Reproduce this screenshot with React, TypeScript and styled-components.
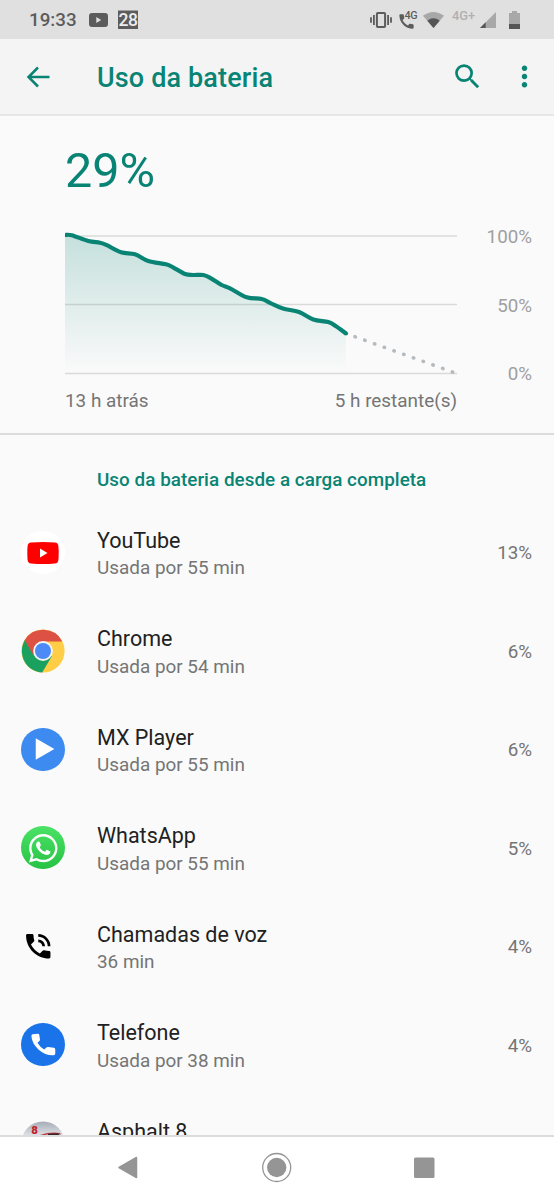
import React from "react";
import styled, { createGlobalStyle } from "styled-components";
import { MdCall, MdPhoneInTalk, MdSearch, MdMoreVert } from "react-icons/md";
import { FaWhatsapp } from "react-icons/fa";

const teal = "#098474";

const GlobalStyle = createGlobalStyle`
  * { box-sizing: border-box; }
  body { margin: 0; background: #fafafa; font-family: Roboto, sans-serif; overflow: hidden; }
`;

const Screen = styled.div`
  width: 554px;
  height: 1200px;
  display: flex;
  flex-direction: column;
  background: #fafafa;
  overflow: hidden;
`;

const StatusBar = styled.div`
  height: 39px;
  flex: none;
  display: flex;
  justify-content: space-between;
  background: #e0e0e0;
  color: #5c5c5c;
`;

const StatusGroup = styled.div`
  display: flex;
  align-items: center;
  &:first-child { padding-left: 29px; }
  &:last-child { padding-right: 34px; }
  svg { display: block; flex: none; }
`;

const Clock = styled.span`
  width: 60px;
  padding-top: 1px;
  font-size: 18.8px;
  line-height: 39px;
  font-weight: 500;
`;

const DateBadge = styled.span`
  width: 20px;
  height: 19px;
  margin: 0 0 0 10px;
  border-top: 1px solid #a0a0a0;
  background: #5c5c5c;
  color: #eee;
  font-size: 17.5px;
  line-height: 19px;
  font-weight: 500;
  letter-spacing: -0.4px;
  text-align: center;
`;

const CallStatus = styled.span`
  display: flex;
  width: 20.5px;
  margin: 0 6px 0 4.5px;
  font-size: 10.8px;
  font-weight: 500;
  line-height: 12px;
  svg { margin-top: 3px; }
  span { margin-left: -11px; margin-top: 1px; letter-spacing: -0.5px; }
`;

const NetworkLabel = styled.span`
  width: 24px;
  margin: -8px 4px 0 8px;
  color: #b0b0b0;
  font-size: 12.8px;
  font-weight: 500;
  line-height: 14px;
`;

const Toolbar = styled.header`
  height: 77px;
  flex: none;
  display: flex;
  align-items: center;
  border-bottom: 2px solid #e6e6e6;
  background: #f4f4f4;
  color: ${teal};
  svg { display: block; flex: none; }
`;

const BackButton = styled.div`
  width: 97px;
  padding-left: 26px;
`;

const Title = styled.h1`
  flex: 1;
  margin: 3px 0 0;
  font-size: 27px;
  line-height: 32px;
  font-weight: 500;
  letter-spacing: 0.14px;
`;

const ToolbarActions = styled.div`
  display: flex;
  align-items: center;
  gap: 24px;
  padding-right: 13px;
`;

const UsageSummary = styled.section`
  height: 319px;
  flex: none;
  padding: 29px 22px 0 65px;
  border-bottom: 2px solid #dcdcdc;
`;

const Level = styled.div`
  height: 56px;
  color: ${teal};
  font-size: 48.5px;
  line-height: 52px;
`;

const ChartRow = styled.div`
  display: flex;
  justify-content: space-between;
  height: 180px;
  margin-top: 25px;
  svg { display: block; overflow: visible; }
`;

const Scale = styled.div`
  display: flex;
  flex-direction: column;
  justify-content: space-between;
  height: 159px;
  color: #a0a0a0;
  font-size: 18.8px;
  line-height: 22px;
  text-align: right;
`;

const ChartColumn = styled.div`
  width: 392px;
  padding-top: 4px;
`;

const TimeAxis = styled.div`
  display: flex;
  justify-content: space-between;
  margin-top: 14px;
  color: #757575;
  font-size: 18.9px;
  line-height: 24px;
`;

const AppList = styled.main`
  flex: 1;
  min-height: 0;
  overflow: hidden;
`;

const ListHeading = styled.h2`
  height: 68.3px;
  margin: 0;
  padding: 33px 0 0 97px;
  color: ${teal};
  font-size: 18.85px;
  line-height: 24px;
  font-weight: 500;
  letter-spacing: 0.04px;
`;

const AppRow = styled.div`
  display: flex;
  align-items: center;
  height: 98.45px;
  padding: 0 22px 0 21px;
`;

const IconSlot = styled.div`
  width: 76px;
  height: 44px;
  flex: none;
  svg { display: block; }
`;

const IconDisc = styled.div<{ $fill: string }>`
  display: flex;
  align-items: center;
  justify-content: center;
  width: 43.2px;
  height: 43.2px;
  margin: 0.4px;
  border-radius: 50%;
  background: ${(p) => p.$fill};
  color: #fff;
`;

const BareIcon = styled.div`
  padding: 5.5px 0 0 0.5px;
  color: #000;
`;

const AppText = styled.div`
  flex: 1;
  height: 59.5px;
  padding-top: 4.2px;
`;

const AppName = styled.div`
  color: #212121;
  font-size: 21.5px;
  line-height: 27px;
`;

const AppDetail = styled.div`
  margin-top: 0.4px;
  color: #757575;
  font-size: 18.9px;
  line-height: 27px;
`;

const Share = styled.div`
  color: #757575;
  font-size: 18.8px;
  line-height: 24px;
  padding-top: 1.6px;
`;

const NavBar = styled.nav`
  height: 65px;
  flex: none;
  display: flex;
  align-items: center;
  border-top: 2px solid #dcdcdc;
  background: #fff;
  svg { display: block; }
`;

type Point = [number, number];

const history: Point[] = [
  [0, 5], [6.7, 5.2], [23.3, 11], [35, 12.7], [42, 15.2], [56, 22.3], [70, 24.3], [83.3, 31],
  [101, 34.3], [108, 37.3], [120, 44], [128, 45], [138.3, 45], [146, 48.3], [156.7, 55], [165, 58.3], [181.7, 67.3],
  [196.7, 69], [206, 73.3], [218, 78.6], [234, 82], [248.3, 89.5], [263.3, 92], [271, 96.2], [281, 103.5],
];

function smoothPath(points: Point[]): string {
  let d = `M${points[0].join(" ")}`;
  for (let i = 0; i < points.length - 1; i++) {
    const before = points[Math.max(i - 1, 0)];
    const from = points[i];
    const to = points[i + 1];
    const after = points[Math.min(i + 2, points.length - 1)];
    const a = [from[0] + (to[0] - before[0]) / 6, from[1] + (to[1] - before[1]) / 6];
    const b = [to[0] - (after[0] - from[0]) / 6, to[1] - (after[1] - from[1]) / 6];
    d += `C${a.join(" ")} ${b.join(" ")} ${to.join(" ")}`;
  }
  return d;
}

function BatteryChart() {
  const line = smoothPath(history);
  return (
    <svg width="392" height="145" viewBox="0 0 392 145">
      <defs>
        <linearGradient id="fade" x1="0" y1="0" x2="0" y2="1">
          <stop offset="0" stopColor={teal} stopOpacity="0.22" />
          <stop offset="1" stopColor={teal} stopOpacity="0" />
        </linearGradient>
      </defs>
      <path d="M0 6H392M0 74.5H392M0 143.5H392" stroke="#dadada" strokeWidth="1.5" />
      <path d={`${line}V143H0Z`} fill="url(#fade)" />
      <path d={line} fill="none" stroke={teal} strokeWidth="4.2" />
      <circle cx="281" cy="103.5" r="2.1" fill={teal} />
      <path
        d="M290 106.7L388 142.2"
        fill="none"
        stroke="#b4babd"
        strokeWidth="3.6"
        strokeLinecap="round"
        strokeDasharray="0.4 9.95"
      />
    </svg>
  );
}

function ChromeLogo() {
  return (
    <svg width="44" height="44" viewBox="0 0 44 44">
      <circle cx="22" cy="22" r="21.6" fill="#ffcd46" />
      <path d="M22 22L3.9 11A21.6 21.6 0 0 0 21.2 43.6L31 27Z" fill="#1aa15f" />
      <path d="M3.7 11.2A21.6 21.6 0 0 1 41.3 12.5H22L12.8 27Z" fill="#dd5144" />
      <circle cx="22" cy="22" r="9.9" fill="#f4f4f4" />
      <circle cx="22" cy="22" r="8" fill="#4c8bf5" />
    </svg>
  );
}

function AsphaltLogo() {
  return (
    <svg width="44" height="44" viewBox="0 0 44 44">
      <defs>
        <clipPath id="disc"><circle cx="22" cy="22" r="21.6" /></clipPath>
        <linearGradient id="sky" x1="0" y1="0" x2="0" y2="1">
          <stop offset="0" stopColor="#a4abb4" />
          <stop offset="0.35" stopColor="#e2e5e9" />
        </linearGradient>
      </defs>
      <g clipPath="url(#disc)">
        <rect width="44" height="44" fill="url(#sky)" />
        <text x="10.3" y="13.2" fontSize="11.5" fontWeight="900" fontFamily="Roboto, sans-serif" fill="#c4202c">8</text>
        <path d="M19 14Q29 10.5 39 12L40 13.5H26L20 15.5Z" fill="#c03a44" />
        <path d="M27 12.7L37 12.2L39 15H27Z" fill="#33262b" />
      </g>
    </svg>
  );
}

interface AppUsage {
  name: string;
  detail?: string;
  share?: string;
  icon: React.ReactNode;
}

const apps: AppUsage[] = [
  {
    name: "YouTube",
    detail: "Usada por 55 min",
    share: "13%",
    icon: (
      <IconDisc $fill="#fff">
        <svg width="32" height="22" viewBox="0 0 32 22">
          <path d="M4 .5Q16-.5 28 .5Q31 .8 31.4 4Q32 11 31.4 18Q31 21.2 28 21.5Q16 22.5 4 21.5Q1 21.2.6 18Q0 11 .6 4Q1 .8 4 .5Z" fill="#f00" />
          <path d="M13 6.5V15.5L20.5 11Z" fill="#fff" />
        </svg>
      </IconDisc>
    ),
  },
  { name: "Chrome", detail: "Usada por 54 min", share: "6%", icon: <ChromeLogo /> },
  {
    name: "MX Player",
    detail: "Usada por 55 min",
    share: "6%",
    icon: (
      <IconDisc $fill="#3d8af0">
        <svg width="44" height="44" viewBox="0 0 44 44"><path d="M15 11V33L34 22Z" fill="#fff" /></svg>
      </IconDisc>
    ),
  },
  {
    name: "WhatsApp",
    detail: "Usada por 55 min",
    share: "5%",
    icon: <IconDisc $fill="linear-gradient(#4be266, #27c243)"><FaWhatsapp size={32.5} /></IconDisc>,
  },
  { name: "Chamadas de voz", detail: "36 min", share: "4%", icon: <BareIcon><MdPhoneInTalk size={32.5} /></BareIcon> },
  {
    name: "Telefone",
    detail: "Usada por 38 min",
    share: "4%",
    icon: (
      <IconDisc $fill="#1a73e8">
        <svg width="44" height="44" viewBox="0 0 44 44">
          <path
            d="M12 11L17 10.5Q18.5 10.4 18.7 12L19.3 16.3Q19.4 17.4 18.5 18.2L16.8 19.7Q19.2 24 23.7 26.6L25.6 24.7Q26.4 23.9 27.6 24L33.4 24.7Q34.9 25 34.9 26.5V30.6Q34.9 32.3 33.2 32.4Q25 32.8 18 26.8Q10.7 20 10.6 12.6Q10.6 11.1 12 11Z"
            fill="#fff"
          />
        </svg>
      </IconDisc>
    ),
  },
  { name: "Asphalt 8", icon: <AsphaltLogo /> },
];

export default function App() {
  return (
    <Screen>
      <GlobalStyle />
      <StatusBar>
        <StatusGroup>
          <Clock>19:33</Clock>
          <svg width="19" height="14" viewBox="0 0 19 14">
            <rect width="19" height="14" rx="3" fill="#5c5c5c" />
            <path d="M7.3 4V10L12.2 7Z" fill="#e0e0e0" />
          </svg>
          <DateBadge>28</DateBadge>
        </StatusGroup>
        <StatusGroup>
          <svg width="22" height="16" viewBox="0 0 22 16">
            <rect x="6.9" y="1" width="8.2" height="14" rx="1" fill="none" stroke="#5c5c5c" strokeWidth="2" />
            <path d="M3.9 3V13M18.1 3V13M1 5.2V10.8M21 5.2V10.8" stroke="#5c5c5c" strokeWidth="1.8" />
          </svg>
          <CallStatus><MdCall size={19} /><span>4G</span></CallStatus>
          <svg width="21" height="16" viewBox="0 0 21 16">
            <path d="M0 3.8Q10.5-3.8 21 3.8L10.5 16Z" fill="#a8a8a8" />
            <path d="M4.3 8.7Q10.5 4 16.7 8.7L10.5 16Z" fill="#555" />
          </svg>
          <NetworkLabel>4G+</NetworkLabel>
          <svg width="16" height="16" viewBox="0 0 16 16">
            <path d="M0 16L16 0V16Z" fill="#a8a8a8" />
            <path d="M0 16L5.7 10.3V16Z" fill="#555" />
          </svg>
          <svg width="24" height="18" viewBox="0 0 24 18">
            <path d="M13 2H16V0H21V2H24V13H13Z" fill="#a8a8a8" />
            <path d="M13 13H24V18H13Z" fill="#555" />
          </svg>
        </StatusGroup>
      </StatusBar>
      <Toolbar>
        <BackButton>
          <svg width="24" height="22" viewBox="0 0 24 22">
            <path d="M23.5 11H2.5M12 1.5L2.5 11L12 20.5" fill="none" stroke="currentColor" strokeWidth="2.5" />
          </svg>
        </BackButton>
        <Title>Uso da bateria</Title>
        <ToolbarActions>
          <MdSearch size={33} />
          <MdMoreVert size={33} />
        </ToolbarActions>
      </Toolbar>
      <UsageSummary>
        <Level>29%</Level>
        <ChartRow>
          <ChartColumn>
            <BatteryChart />
            <TimeAxis><span>13 h atrás</span><span>5 h restante(s)</span></TimeAxis>
          </ChartColumn>
          <Scale><span>100%</span><span>50%</span><span>0%</span></Scale>
        </ChartRow>
      </UsageSummary>
      <AppList>
        <ListHeading>Uso da bateria desde a carga completa</ListHeading>
        {apps.map((app) => (
          <AppRow key={app.name}>
            <IconSlot>{app.icon}</IconSlot>
            <AppText>
              <AppName>{app.name}</AppName>
              {app.detail && <AppDetail>{app.detail}</AppDetail>}
            </AppText>
            {app.share && <Share>{app.share}</Share>}
          </AppRow>
        ))}
      </AppList>
      <NavBar>
        <svg width="554" height="63" viewBox="0 0 554 63">
          <path d="M119 30.5L136.5 20.5V40.5Z" fill="#959595" stroke="#959595" strokeWidth="1.5" strokeLinejoin="round" />
          <circle cx="276.7" cy="30.5" r="14" fill="none" stroke="#959595" strokeWidth="1.3" />
          <circle cx="276.7" cy="30.5" r="9.7" fill="#959595" />
          <rect x="414" y="20.5" width="20.5" height="20.5" rx="1.5" fill="#959595" />
        </svg>
      </NavBar>
    </Screen>
  );
}
